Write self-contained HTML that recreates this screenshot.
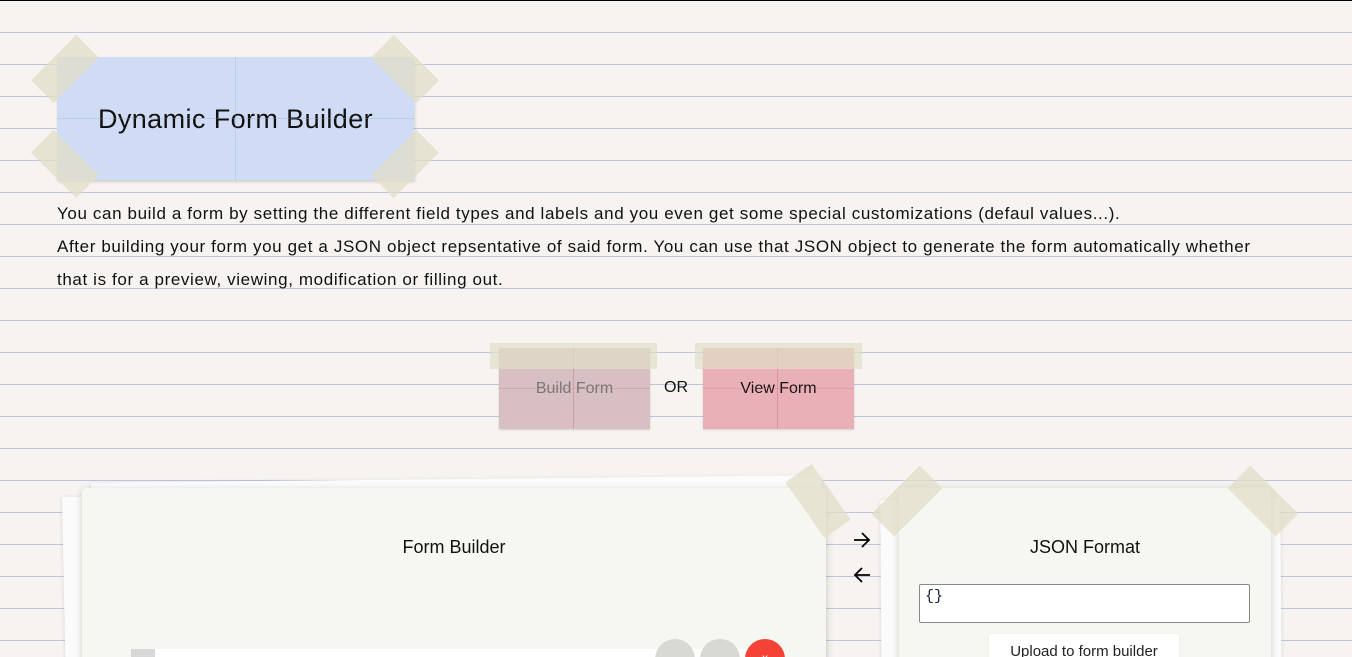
<!DOCTYPE html>
<html><head><meta charset="utf-8">
<style>
*{box-sizing:border-box;margin:0;padding:0}
html,body{width:1352px;height:657px;overflow:hidden}
body{background-color:#f6f3f0;
background-image:repeating-linear-gradient(to bottom,transparent 0,transparent 31px,#bcc6dd 31px,#bcc6dd 32px,transparent 32px);
background-position:0 1px;
font-family:"Liberation Sans",sans-serif;color:#111;position:relative;border-top:1px solid #000}
.abs{position:absolute}
.tape{position:absolute;width:32px;height:64px;background:rgba(225,222,200,0.75)}
.title{left:57px;top:56px;width:357px;height:123px;background:#d0dcf5;box-shadow:1px 2px 3px rgba(0,0,0,.15);
display:flex;align-items:center;justify-content:center;font-size:27px;letter-spacing:0.4px;color:#111;padding-top:1px}
.title:before{content:"";position:absolute;left:178px;top:0;bottom:0;width:1px;background:rgba(150,170,200,.3)}
.title:after{content:"";position:absolute;top:61px;left:0;right:0;height:1px;background:rgba(150,170,200,.3)}
p.t{position:absolute;left:57px;top:196px;font-size:17px;letter-spacing:0.62px;line-height:33px;color:#111;width:1290px;white-space:nowrap}
.btn{position:absolute;top:347px;width:151px;height:81px;display:flex;align-items:center;justify-content:center;font-size:16px;box-shadow:0 1px 2px rgba(0,0,0,.15)}
.btn:before{content:"";position:absolute;left:74px;top:0;bottom:0;width:1px;background:rgba(200,120,130,.5)}
.btn:after{content:"";position:absolute;left:0;right:0;top:40px;height:1px;background:rgba(200,120,130,.3)}
.ht{position:absolute;top:342px;height:26px;background:rgba(225,222,200,.7)}
.card{position:absolute;background:#f7f7f2;border-radius:4px;box-shadow:0 2px 8px rgba(0,0,0,.18)}
.sheet{position:absolute;background:#fbfbfb;box-shadow:0 1px 4px rgba(0,0,0,.12)}
</style></head><body>

<div class="abs title">Dynamic Form Builder</div>
<div class="tape" style="left:49px;top:36px;transform:rotate(45deg)"></div>
<div class="tape" style="left:389px;top:36px;transform:rotate(-45deg)"></div>
<div class="tape" style="left:49px;top:131px;transform:rotate(-45deg)"></div>
<div class="tape" style="left:389px;top:131px;transform:rotate(45deg)"></div>

<p class="t">You can build a form by setting the different field types and labels and you even get some special customizations (defaul values...).<br>After building your form you get a JSON object repsentative of said form. You can use that JSON object to generate the form automatically whether<br>that is for a preview, viewing, modification or filling out.</p>

<div class="btn" style="left:499px;background:#d8bfc4;color:#777">Build Form</div>
<div class="btn" style="left:703px;background:#eab0b7;color:#111">View Form</div>
<div class="ht" style="left:490px;width:167px"></div>
<div class="ht" style="left:695px;width:167px"></div>
<div class="abs" style="left:664px;top:378px;font-size:16px">OR</div>

<!-- form builder -->
<div class="sheet" style="left:64px;top:488px;width:760px;height:200px;transform:rotate(-1.2deg)"></div>
<div class="sheet" style="left:92px;top:478px;width:730px;height:200px;transform:rotate(-0.6deg)"></div>
<div class="card" style="left:82px;top:487px;width:744px;height:200px"></div>
<div class="abs" style="left:82px;top:536px;width:744px;text-align:center;font-size:18px">Form Builder</div>
<div class="tape" style="left:802px;top:466px;width:32px;height:68px;transform:rotate(-35deg)"></div>
<div class="abs" style="left:131px;top:648px;width:630px;height:20px;background:#fff"></div>
<div class="abs" style="left:131px;top:648px;width:24px;height:20px;background:#d8d8d8"></div>
<div class="abs" style="left:655px;top:638px;width:40px;height:40px;border-radius:50%;background:#d9d9d4"></div>
<div class="abs" style="left:700px;top:638px;width:40px;height:40px;border-radius:50%;background:#d9d9d4"></div>
<div class="abs" style="left:745px;top:638px;width:40px;height:40px;border-radius:50%;background:#f44336;color:#fff;text-align:center;font-size:12px;padding-top:12px">x</div>

<svg class="abs" style="left:852px;top:530px" width="20" height="18" viewBox="0 0 20 18"><path d="M2 9H17M10 2L17 9L10 16" fill="none" stroke="#000" stroke-width="1.8"/></svg>
<svg class="abs" style="left:852px;top:565px" width="20" height="18" viewBox="0 0 20 18"><path d="M18 9H3M10 2L3 9L10 16" fill="none" stroke="#000" stroke-width="1.8"/></svg>

<!-- json -->
<div class="sheet" style="left:881px;top:498px;width:400px;height:200px;transform:rotate(-0.4deg)"></div>
<div class="card" style="left:899px;top:487px;width:372px;height:200px"></div>
<div class="tape" style="left:891px;top:466px;width:32px;height:68px;transform:rotate(45deg)"></div>
<div class="tape" style="left:1247px;top:466px;width:32px;height:68px;transform:rotate(-45deg)"></div>
<div class="abs" style="left:899px;top:536px;width:372px;text-align:center;font-size:18px">JSON Format</div>
<div class="abs" style="left:919px;top:583px;width:331px;height:39px;background:#fff;border:1px solid #888;border-radius:2px;font-family:'Liberation Mono',monospace;font-size:15px;padding:3px 5px;color:#123">{}</div>
<div class="abs" style="left:989px;top:633px;width:190px;height:30px;background:#fff;border-radius:3px;box-shadow:0 1px 2px rgba(0,0,0,.1);text-align:center;font-size:15px;padding-top:9px;color:#222">Upload to form builder</div>

</body></html>
